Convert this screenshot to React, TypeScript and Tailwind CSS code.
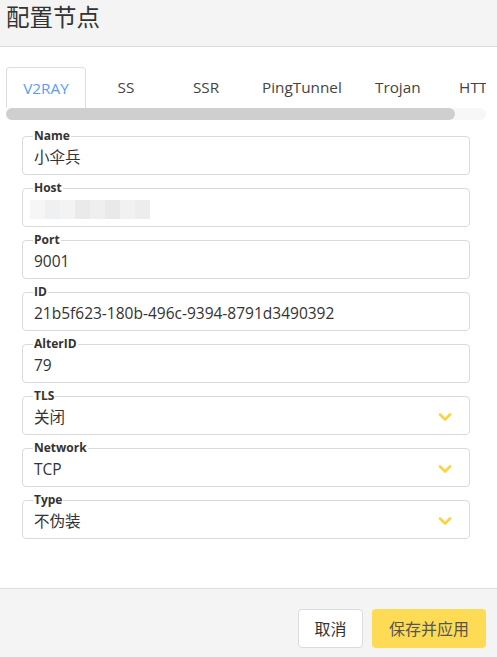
import { ChevronDown } from "lucide-react";

const font = { fontFamily: '"Open Sans", "Noto Sans CJK SC", sans-serif' };

const tabs = ["V2RAY", "SS", "SSR", "PingTunnel", "Trojan", "HTTP"];

interface Field {
  label: string;
  value?: string;
  select?: boolean;
  masked?: boolean;
}

const fields: Field[] = [
  { label: "Name", value: "小伞兵" },
  { label: "Host", masked: true },
  { label: "Port", value: "9001" },
  { label: "ID", value: "21b5f623-180b-496c-9394-8791d3490392" },
  { label: "AlterID", value: "79" },
  { label: "TLS", value: "关闭", select: true },
  { label: "Network", value: "TCP", select: true },
  { label: "Type", value: "不伪装", select: true },
];

// blurred host placeholder
const maskColors = ["#f6f6f6", "#eef0f2", "#f3f3f3", "#eaeaea", "#efefef", "#e9e9e9", "#f1f1f1", "#ededed"];

export default function App() {
  return (
    <div className="w-[497px] h-[657px] flex flex-col bg-white text-[#333]" style={font}>
      {/* Header */}
      <div className="h-[47px] shrink-0 bg-[#f4f4f4] border-b border-[#dcdcdc] px-[6px]">
        <h1 className="text-[23.5px] leading-[34px] text-[#333]">配置节点</h1>
      </div>

      {/* Body */}
      <div className="flex-1 pt-[20px]">
        <div className="mx-[6px] w-[480px]">
          <div className="flex overflow-hidden h-[41px]">
            {tabs.map((t, i) => (
              <div
                key={t}
                className={`shrink-0 h-[41px] flex items-center justify-center text-[15.3px] ${
                  t === "PingTunnel" ? "px-[16px]" : "w-[80px]"
                } ${
                  i === 0
                    ? "border border-b-0 border-[#dedede] rounded-t-[4px] text-[#5b9cf5]"
                    : "text-[#444]"
                }`}
              >
                {t}
              </div>
            ))}
          </div>
          {/* scrollbar */}
          <div className="h-[12px] rounded-full bg-[#f7f7f7]">
            <div className="h-[12px] w-[449px] rounded-full bg-[#cfcfcf]" />
          </div>
        </div>

        <div className="mt-[10px] ml-[22px] w-[448px] flex flex-col gap-[7px]">
          {fields.map((f) => (
            <fieldset key={f.label} className="border border-[#dadada] rounded-[4px] pl-[11px] pr-[14px]">
              <legend className="text-[12px] leading-[12px] font-bold text-[#333] px-[1px] -ml-[1px]">
                {f.label}
              </legend>
              <div className="mt-[5px] mb-[7px] h-[20px] flex items-center justify-between">
                {f.masked ? (
                  <div className="flex -ml-[4px]">
                    {maskColors.map((c, i) => (
                      <div key={i} className="w-[15px] h-[19px]" style={{ background: c }} />
                    ))}
                  </div>
                ) : (
                  <span className="text-[15.5px] leading-[20px] text-[#333]">{f.value}</span>
                )}
                {f.select && (
                  <ChevronDown className="w-[20px] h-[20px] text-[#fdd43f]" strokeWidth={3.2} />
                )}
              </div>
            </fieldset>
          ))}
        </div>
      </div>

      {/* Footer */}
      <div className="h-[69px] shrink-0 bg-[#f4f4f4] border-t border-[#dcdcdc] flex justify-end items-start pt-[20px] pr-[11px] gap-[9px]">
        <button className="w-[65px] h-[39px] bg-white border border-[#dcdcdc] rounded-[4px] text-[16px] text-[#333]">
          取消
        </button>
        <button className="w-[114px] h-[39px] bg-[#fedb55] rounded-[4px] text-[16px] text-[#555]">
          保存并应用
        </button>
      </div>
    </div>
  );
}
